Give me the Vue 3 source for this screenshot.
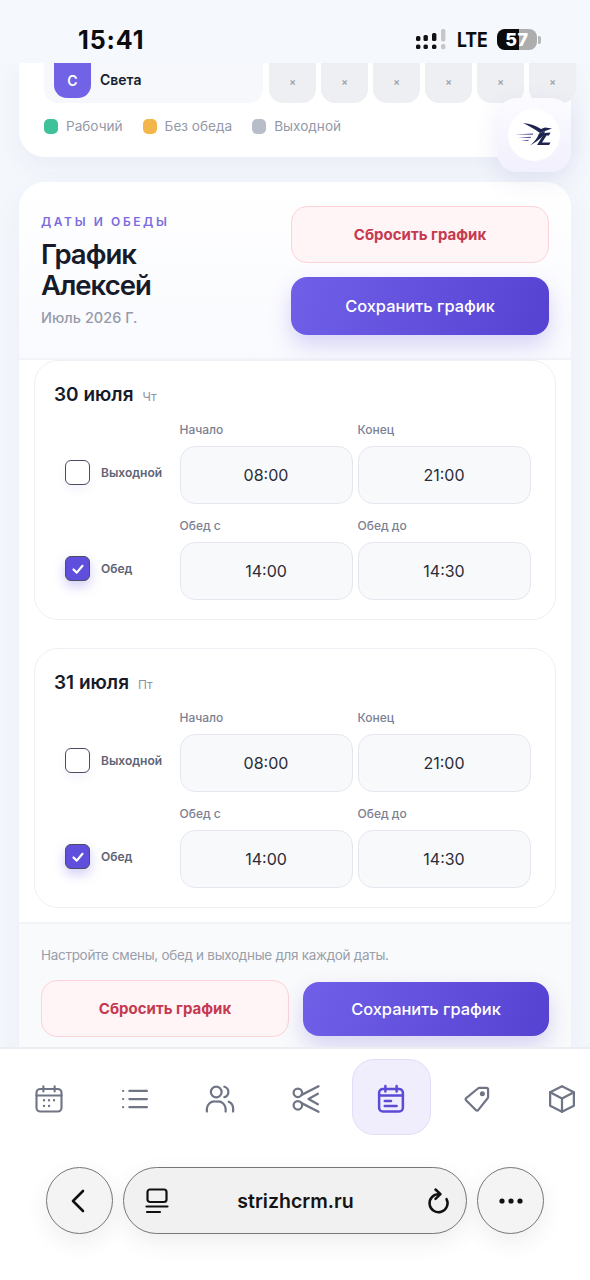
<script setup>
const cells = [1, 2, 3, 4, 5, 6]
const legend = [
  { label: 'Рабочий', color: '#3fc19a' },
  { label: 'Без обеда', color: '#f3b64a' },
  { label: 'Выходной', color: '#b8bdca' }
]
const days = [
  { date: '30 июля', wd: 'Чт' },
  { date: '31 июля', wd: 'Пт' }
]
</script>

<template>
  <div class="page">
    <header class="status">
      <span class="time">15:41</span>
      <div class="status-right">
        <svg class="signal" width="30" height="22" viewBox="0 0 30 22" fill="#111">
          <rect x="0" y="7" width="4.4" height="5" rx="1.6" />
          <rect x="0" y="15.5" width="4.4" height="4.6" rx="1.6" />
          <rect x="7.5" y="6" width="4.4" height="6" rx="1.6" />
          <rect x="7.5" y="15.5" width="4.4" height="4.6" rx="1.6" />
          <rect x="16" y="4" width="4.4" height="8" rx="1.6" />
          <rect x="16" y="15.5" width="4.4" height="4.6" rx="1.6" />
          <rect x="25" y="0" width="4.4" height="12.4" rx="1.6" fill="#c6c6c8" />
          <rect x="25" y="15" width="4.4" height="5.2" rx="1.6" fill="#c6c6c8" />
        </svg>
        <span class="lte">LTE</span>
        <div class="battery">
          <div class="battery-fill"></div>
          <span class="battery-num">57</span>
        </div>
        <span class="battery-tip"></span>
      </div>
    </header>

    <main class="main">
      <section class="top-card">
        <div class="staff-row">
          <div class="staff">
            <span class="avatar">С</span>
            <span class="staff-name">Света</span>
          </div>
          <span v-for="c in cells" :key="c" class="cell">×</span>
        </div>
        <div class="legend">
          <span v-for="l in legend" :key="l.label" class="legend-item">
            <i class="swatch" :style="{ background: l.color }"></i>{{ l.label }}
          </span>
        </div>
      </section>

      <div class="logo-tile">
        <div class="logo-circle">
          <svg width="40" height="34" viewBox="0 0 40 34" fill="#1f2350">
            <path d="M9 5 C16 5.5 22 7.5 27 11 L31 9.5 L38 10.5 L31 13 L26 15 C21 11 15 8 9 5Z" />
            <path d="M31 13 L25 15.5 C23 21 20 24 16 27.5 C21 25 26 21 30 17 Z" />
            <path d="M36.5 14.6 L30.5 15 L23 27 L35 27 L36.5 24.4 L28 24.4 L32.5 17.4 L35 17.4Z" />
            <g fill="#4b4c9e">
              <path d="M1 16.4 L19 15.6 L19 16.7Z" />
              <path d="M4 19.6 L17 18.8 L16.5 20Z" />
              <path d="M7 23 L15 21.8 L14 23Z" />
            </g>
          </svg>
        </div>
      </div>

      <section class="schedule">
        <div class="sch-head">
          <div class="sch-title">
            <div class="eyebrow">ДАТЫ И ОБЕДЫ</div>
            <h1 class="title">График<br />Алексей</h1>
            <div class="month">Июль 2026 Г.</div>
          </div>
          <div class="sch-actions">
            <button class="btn btn-reset">Сбросить график</button>
            <button class="btn btn-save">Сохранить график</button>
          </div>
        </div>

        <div class="days">
          <article v-for="d in days" :key="d.date" class="day">
            <div class="day-head">
              <span class="day-date">{{ d.date }}</span>
              <span class="day-wd">{{ d.wd }}</span>
            </div>
            <div class="day-row">
              <label class="check">
                <span class="box"></span>
                <span class="check-label">Выходной</span>
              </label>
              <div class="field">
                <span class="field-label">Начало</span>
                <div class="input">08:00</div>
              </div>
              <div class="field">
                <span class="field-label">Конец</span>
                <div class="input">21:00</div>
              </div>
            </div>
            <div class="day-row">
              <label class="check">
                <span class="box box-on">
                  <svg width="14" height="14" viewBox="0 0 14 14" fill="none" stroke="#fff" stroke-width="2.2" stroke-linecap="round" stroke-linejoin="round">
                    <path d="M2.5 7.5 L5.8 10.6 L11.5 3.8" />
                  </svg>
                </span>
                <span class="check-label">Обед</span>
              </label>
              <div class="field">
                <span class="field-label">Обед с</span>
                <div class="input">14:00</div>
              </div>
              <div class="field">
                <span class="field-label">Обед до</span>
                <div class="input">14:30</div>
              </div>
            </div>
          </article>
        </div>

        <footer class="sch-foot">
          <p class="foot-text">Настройте смены, обед и выходные для каждой даты.</p>
          <div class="foot-actions">
            <button class="btn btn-reset">Сбросить график</button>
            <button class="btn btn-save btn-save-foot">Сохранить график</button>
          </div>
        </footer>
      </section>
    </main>

    <nav class="tabs">
      <span class="tab">
        <svg width="30" height="30" viewBox="0 0 24 24" fill="none" stroke="#6f7585" stroke-width="1.7" stroke-linecap="round" stroke-linejoin="round">
          <rect x="2" y="4" width="20" height="18" rx="3" />
          <path d="M7.5 1.8V6M16.5 1.8V6M2 9.2H22" />
          <path d="M8 13h.01M12 13h.01M16 13h.01M8 17.5h.01M12 17.5h.01" stroke-width="1.9" />
        </svg>
      </span>
      <span class="tab">
        <svg width="30" height="30" viewBox="0 0 24 24" fill="none" stroke="#6f7585" stroke-width="1.8" stroke-linecap="round">
          <path d="M7.5 5.5H21.5M7.5 12H21.5M7.5 18.5H21.5" />
          <path d="M2.5 5.5h.01M2.5 12h.01M2.5 18.5h.01" />
        </svg>
      </span>
      <span class="tab">
        <svg width="30" height="30" viewBox="0 0 24 24" fill="none" stroke="#6f7585" stroke-width="1.8" stroke-linecap="round" stroke-linejoin="round">
          <circle cx="9" cy="6.4" r="4.3" />
          <path d="M1.5 22v-2.5A6 6 0 0 1 7.5 14h3a6 6 0 0 1 6 5.5V22" />
          <path d="M15.5 2.2a4.3 4.3 0 0 1 0 8.3" />
          <path d="M22.5 22v-2.5A6 6 0 0 0 19 14.2" />
        </svg>
      </span>
      <span class="tab">
        <svg width="30" height="30" viewBox="0 0 24 24" fill="none" stroke="#6f7585" stroke-width="1.8" stroke-linecap="round" stroke-linejoin="round">
          <circle cx="5.5" cy="7" r="3.4" />
          <circle cx="5.5" cy="17" r="3.4" />
          <path d="M8.5 8.7 L22 1.8M8.5 15.3 L22 22.2M14 12 L21.5 7.8M14 12 L21.5 16.2" />
        </svg>
      </span>
      <span class="tab tab-active">
        <svg width="30" height="30" viewBox="0 0 24 24" fill="none" stroke="#5b4bd6" stroke-width="2" stroke-linecap="round" stroke-linejoin="round">
          <rect x="2.5" y="4" width="19" height="18" rx="3" />
          <path d="M7.5 1.6V6M16.5 1.6V6M2.5 9.2H21.5" />
          <path d="M7 13.5H12M7 17.5H16.5" />
        </svg>
      </span>
      <span class="tab">
        <svg width="28" height="28" viewBox="0 0 24 24" fill="none" stroke="#6f7585" stroke-width="1.9" stroke-linecap="round" stroke-linejoin="round">
          <path d="M14 2.5h6a1.5 1.5 0 0 1 1.5 1.5v6.2a2 2 0 0 1-.4 1.2L13 21.5a1.2 1.2 0 0 1-1.8.1L2.6 13a1.2 1.2 0 0 1 .1-1.8L12.8 3a2 2 0 0 1 1.2-.5Z" />
          <circle cx="16.6" cy="7.4" r="1.2" fill="#6f7585" />
        </svg>
      </span>
      <span class="tab">
        <svg width="30" height="30" viewBox="0 0 24 24" fill="none" stroke="#6f7585" stroke-width="1.8" stroke-linecap="round" stroke-linejoin="round">
          <path d="M12 1.8 L21.5 6.6V17.4L12 22.2 L2.5 17.4V6.6Z" />
          <path d="M2.5 6.6 L12 11.6 L21.5 6.6M12 11.6V22.2" />
        </svg>
      </span>
    </nav>

    <div class="browser">
      <button class="round">
        <svg class="back" width="24" height="28" viewBox="0 0 24 28" fill="none" stroke="#111" stroke-width="2.6" stroke-linecap="round" stroke-linejoin="round">
          <path d="M17 4 L7 14 L17 24" />
        </svg>
      </button>
      <div class="url">
        <svg width="24" height="28" viewBox="0 0 24 28" fill="none" stroke="#111" stroke-width="2.2" stroke-linecap="round" stroke-linejoin="round">
          <rect x="2.5" y="2.5" width="19" height="12.5" rx="2.5" />
          <path d="M1.5 19.5H22.5M2 25H15" />
        </svg>
        <span class="url-text">strizhcrm.ru</span>
        <svg width="24" height="28" viewBox="0 0 24 28" fill="none" stroke="#111" stroke-width="2.5" stroke-linecap="round" stroke-linejoin="round">
          <path d="M13 7.2 A9 9 0 1 0 20.5 12" />
          <path d="M9.5 2.5 L14.5 7.2 L9.5 11.8" />
        </svg>
      </div>
      <button class="round">
        <svg width="26" height="8" viewBox="0 0 26 8" fill="#111">
          <circle cx="4" cy="4" r="2.6" />
          <circle cx="13" cy="4" r="2.6" />
          <circle cx="22" cy="4" r="2.6" />
        </svg>
      </button>
    </div>
  </div>
</template>

<style>
html, body { margin: 0; background: #f4f7fc; }
</style>

<style scoped>
* { box-sizing: border-box; }
.page {
  position: relative;
  width: 590px;
  height: 1280px;
  overflow: hidden;
  display: flex;
  flex-direction: column;
  background: #f4f7fc;
  font-family: Inter, "Noto Sans", sans-serif;
  color: #171b29;
}
.status {
  flex: 0 0 63px;
  display: flex;
  justify-content: space-between;
  align-items: center;
  padding: 16px 49px 0 78px;
  background: #f5f8fd;
}
.time { font-size: 25px; font-weight: 700; color: #0c0c0e; letter-spacing: 0.9px; line-height: 30px; }
.status-right { display: flex; align-items: center; height: 24px; }
.signal { margin-right: 11px; }
.lte { font-size: 20px; font-weight: 700; color: #0c0c0e; margin-right: 10px; line-height: 24px; transform: scaleX(.88); transform-origin: left; width: 30px; }
.battery {
  position: relative;
  width: 40px;
  height: 21px;
  border-radius: 8px;
  background: #adadad;
  overflow: hidden;
  text-align: center;
}
.battery-fill { position: absolute; left: 0; top: 0; bottom: 0; width: 22px; background: #0b0b0b; }
.battery-num { position: relative; font-size: 18px; font-weight: 800; line-height: 21px; color: #fff; display: block; letter-spacing: 0.5px; }
.battery-tip { width: 3px; height: 8px; background: #b8b8b8; border-radius: 0 2px 2px 0; margin-left: 1px; }

.main { flex: 0 0 984px; padding: 0 19px; overflow: hidden; position: relative; }
.top-card {
  height: 94px;
  background: #fff;
  border-radius: 0 0 26px 26px;
  box-shadow: 0 10px 24px rgba(60, 70, 120, .05);
  padding: 0 0 0 25px;
  overflow: visible;
}
.staff-row { display: flex; gap: 5px; height: 40px; width: 540px; }
.staff {
  flex: 0 0 219px;
  margin-right: 1px;
  background: #f7f8fc;
  border-radius: 0 0 14px 14px;
  display: flex;
  align-items: flex-start;
  padding-left: 10px;
  gap: 9px;
}
.avatar {
  width: 37px;
  height: 35px;
  border-radius: 0 0 13px 13px;
  background: #7162e6;
  color: #fff;
  font-size: 14px;
  font-weight: 600;
  display: flex;
  align-items: center;
  justify-content: center;
}
.staff-name { font-size: 14px; font-weight: 600; line-height: 34px; color: #191d2b; }
.cell {
  flex: 0 0 47px;
  height: 40px;
  border-radius: 0 0 14px 14px;
  background: #eeeff3;
  color: #9a9eaa;
  font-size: 10px;
  font-weight: 600;
  display: flex;
  align-items: center;
  justify-content: center;
  padding-bottom: 5px;
}
.legend { display: flex; gap: 20px; margin-top: 15px; }
.legend-item { display: flex; align-items: center; gap: 8px; font-size: 13.6px; line-height: 17px; color: #9499a8; }
.swatch { width: 14px; height: 15px; border-radius: 5px; display: block; }

.logo-tile {
  position: absolute;
  left: 497px;
  top: 35px;
  width: 74px;
  height: 74px;
  border-radius: 20px;
  background: linear-gradient(180deg, #fbfbff, #f1f0fd);
  box-shadow: 0 8px 24px rgba(80, 70, 180, .1);
  display: flex;
  align-items: center;
  justify-content: center;
}
.logo-circle {
  width: 52px;
  height: 52px;
  border-radius: 50%;
  background: #fff;
  display: flex;
  align-items: center;
  justify-content: center;
  padding-right: 1px;
}

.schedule {
  margin-top: 25px;
  background: #fff;
  border-radius: 26px 26px 0 0;
  box-shadow: 0 10px 30px rgba(60, 70, 120, .05);
}
.sch-head {
  height: 178px;
  padding: 24px 22px 0 22px;
  display: flex;
  justify-content: space-between;
  background: linear-gradient(180deg, #fff, #f9fafe);
  border-bottom: 2px solid #f1f3f8;
  border-radius: 26px 26px 0 0;
}
.eyebrow { font-size: 12px; font-weight: 600; letter-spacing: 2.6px; color: #7a6ce0; line-height: 15px; margin-top: 8px; }
.title { margin: 10px 0 0; font-size: 27.5px; font-weight: 600; line-height: 31px; letter-spacing: -1px; color: #171b29; }
.month { font-size: 14.5px; font-weight: 500; color: #959aaa; margin-top: 8px; line-height: 18px; }
.sch-actions { width: 258px; display: flex; flex-direction: column; gap: 14px; }
.btn {
  font-family: inherit;
  height: 57px;
  border-radius: 16px;
  font-size: 15px;
  display: block;
  width: 100%;
  padding: 0;
}
.btn-reset {
  background: #fff5f6;
  border: 1.5px solid #fbd3d9;
  color: #c53a50;
  font-weight: 700;
}
.btn-save {
  height: 58px;
  background: linear-gradient(110deg, #7060e8, #5642d2);
  border: 0;
  color: #fff;
  font-size: 16.4px;
  font-weight: 500;
  box-shadow: 0 10px 22px rgba(90, 70, 220, .22);
}
.days { padding: 0 15px 14px; display: flex; flex-direction: column; gap: 28px; }
.day {
  height: 260px;
  border: 1.5px solid #eff0f5;
  border-radius: 24px;
  background: #fff;
  padding: 20px 23.5px 0 19px;
}
.day-head { display: flex; align-items: baseline; gap: 9px; height: 40.5px; padding-top: 1px; }
.day-date { font-size: 19px; font-weight: 600; line-height: 26px; color: #171b29; }
.day-wd { font-size: 12px; color: #8d92a2; }
.day-row { display: flex; gap: 5px; height: 96px; margin-left: 11px; }
.check { flex: 0 0 109.5px; display: flex; align-items: center; gap: 11px; padding-top: 6px; }
.box {
  width: 25px;
  height: 25px;
  flex: none;
  border: 1.5px solid #4a4e63;
  border-radius: 6px;
  background: #fff;
  box-shadow: 0 5px 10px rgba(90, 80, 200, .06);
}
.box-on {
  background: #5f4fdc;
  display: flex;
  align-items: center;
  justify-content: center;
  box-shadow: 0 5px 12px rgba(90, 70, 220, .28);
}
.check-label { font-size: 12px; font-weight: 600; color: #5e6375; }
.field { flex: 0 0 173px; display: flex; flex-direction: column; }
.field-label { font-size: 12px; font-weight: 500; color: #7b8092; line-height: 16px; height: 24px; }
.input {
  height: 58px;
  border: 1.5px solid #e5e7f0;
  border-radius: 15px;
  background: #f8f9fb;
  display: flex;
  align-items: center;
  justify-content: center;
  font-size: 16px;
  color: #2a2d38;
}
.sch-foot {
  background: #f9fafb;
  border-top: 2px solid #f1f3f7;
  padding: 21px 22px 0;
  height: 200px;
}
.foot-text { margin: 0; font-size: 13.5px; line-height: 20px; color: #999eab; letter-spacing: -0.3px; }
.foot-actions { display: flex; align-items: center; gap: 14px; margin-top: 15px; }
.foot-actions .btn { flex: 1; width: auto; }
.btn-save-foot { height: 54px; }

.tabs {
  flex: 0 0 101px;
  background: #fff;
  border-top: 2px solid #ebedf2;
  display: flex;
  gap: 6.5px;
  padding: 10px 0 0 9.5px;
  position: relative;
  z-index: 1;
}
.tab {
  flex: 0 0 79px;
  height: 76px;
  display: flex;
  align-items: center;
  justify-content: center;
  border-radius: 22px;
  border: 1.5px solid transparent;
  padding-top: 4px;
}
.tab-active { background: #f0edfd; border-color: #e2ddf9; }

.browser {
  flex: 1;
  background: #fff;
  display: flex;
  gap: 10px;
  padding: 19px 46px 0;
}
.round {
  flex: 0 0 67px;
  height: 67px;
  border-radius: 50%;
  border: 1px solid #77777a;
  background: #f4f4f4;
  box-shadow: 0 8px 24px rgba(0, 0, 0, .07);
  display: flex;
  align-items: center;
  justify-content: center;
  padding: 0;
}
.back { margin-right: 4px; }
.url {
  flex: 0 0 344px;
  height: 67px;
  border-radius: 34px;
  border: 1px solid #77777a;
  background: #f1f1f1;
  box-shadow: 0 8px 24px rgba(0, 0, 0, .07);
  display: flex;
  align-items: center;
  justify-content: space-between;
  padding: 0 16px 0 21px;
}
.url-text { font-size: 19.5px; font-weight: 600; color: #141414; margin-right: 4px; }
</style>
